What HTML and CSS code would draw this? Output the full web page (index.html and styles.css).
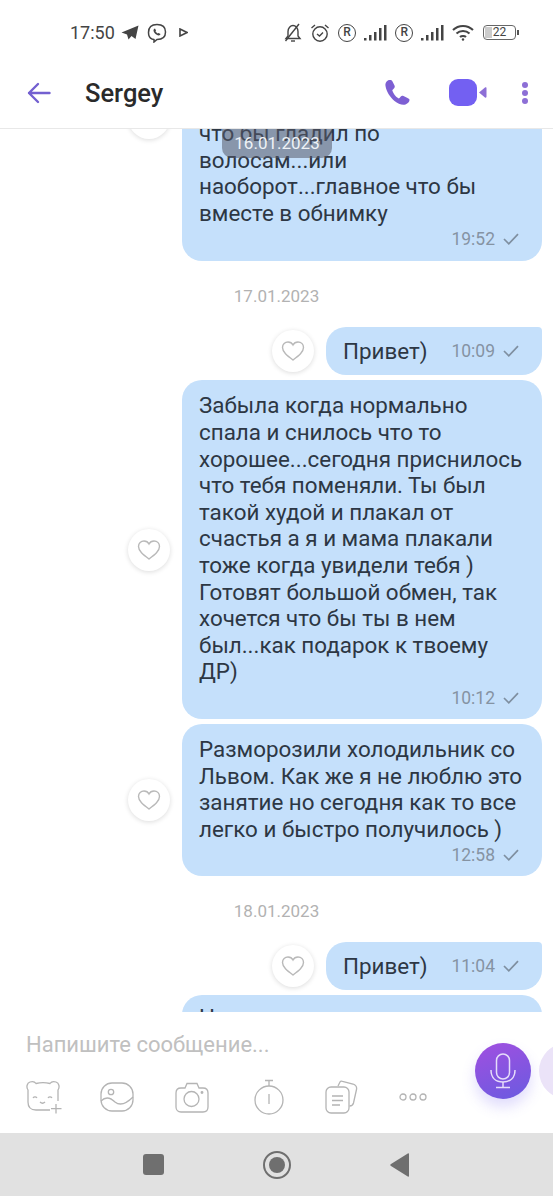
FILE: index.html
```html
<!DOCTYPE html>
<html lang="en">
<head>
    <meta charset="UTF-8">
    <meta name="viewport" content="width=device-width, initial-scale=1.0">
    <title>Sergey</title>
    <link rel="stylesheet" href="styles.css">
</head>
<body>
    <div class="phone">
        <div class="status-bar">
            <span class="status-time">17:50</span>
            <svg class="st-telegram" width="18" height="15" viewBox="0 0 18 15"><path d="M17.5 0.5 L0.5 7.5 L6 9.5 L7.5 14.5 L10.5 11 L14.5 14 Z" fill="#444"/></svg>
            <svg class="st-viber" width="20" height="20" viewBox="0 0 20 20" fill="none" stroke="#444" stroke-width="1.5"><path d="M5 16 C2.5 15 1.5 13 1.5 9.5 C1.5 4 4 1.5 10 1.5 C16 1.5 18.5 4 18.5 9 C18.5 14.5 15.5 16.5 10 16.5 L7 19 L7 16.5 Z"/><path d="M7 6 C6 7 6.5 9 8 10.5 C9.5 12 11.5 13 13 12 L13.5 11 L11.5 10 L10.5 10.5 L8.5 8.5 L9 7.5 L8 5.5 Z" fill="#444" stroke="none"/></svg>
            <svg class="st-play" width="9" height="9" viewBox="0 0 9 9" fill="none" stroke="#444" stroke-width="1.6"><path d="M1 1 L8 4.5 L1 8 Z"/></svg>
            <div class="status-right">
                <svg width="20" height="20" viewBox="0 0 20 20" fill="none" stroke="#444" stroke-width="1.4"><path d="M3 15.5 L5 13 L5 8.5 C5 5 7.5 2.5 10 2.5 C12.5 2.5 15 5 15 8.5 L15 13 L17 15.5 Z"/><path d="M8 18 L12 18"/><path d="M2.5 18 L16 1"/></svg>
                <svg width="20" height="20" viewBox="0 0 20 20" fill="none" stroke="#444" stroke-width="1.4"><circle cx="10" cy="11" r="7.2"/><path d="M7 11 L9.5 13 L13 9.5"/><path d="M1.5 5 L5 2 M18.5 5 L15 2"/></svg>
                <span class="reg-mark">R</span>
                <svg width="24" height="18" viewBox="0 0 24 18" fill="#444"><rect x="0" y="14" width="2.5" height="2.5"/><rect x="5" y="11" width="2.5" height="5.5"/><rect x="10" y="8" width="2.5" height="8.5"/><rect x="15" y="4" width="2.5" height="12.5"/><rect x="20" y="1" width="2.5" height="15.5"/></svg>
                <span class="reg-mark">R</span>
                <svg width="24" height="18" viewBox="0 0 24 18" fill="#444"><rect x="0" y="14" width="2.5" height="2.5"/><rect x="5" y="11" width="2.5" height="5.5"/><rect x="10" y="8" width="2.5" height="8.5"/><rect x="15" y="4" width="2.5" height="12.5"/><rect x="20" y="1" width="2.5" height="15.5"/></svg>
                <svg width="23" height="18" viewBox="0 0 23 18" fill="none" stroke="#444" stroke-width="2"><path d="M1 6 C6.5 0.5 15.5 0.5 21 6"/><path d="M4.5 9.5 C8 6 14 6 17.5 9.5"/><path d="M8 13 C9.5 11.5 12.5 11.5 14 13"/><circle cx="11" cy="15.5" r="1.2" fill="#444" stroke="none"/></svg>
                <div class="battery"><span class="battery-fill"></span><span class="battery-num">22</span></div>
            </div>
        </div>

        <div class="toolbar">
            <svg class="back-icon" width="24" height="22" viewBox="0 0 24 22" fill="none" stroke="#7360d0" stroke-width="2.4" stroke-linecap="round" stroke-linejoin="round"><path d="M22.5 11 L2 11 M11 2 L2 11 L11 20"/></svg>
            <div class="contact-name">Sergey</div>
            <svg class="phone-icon" width="27" height="27" viewBox="0 0 27 27"><path d="M5 1 C3 1.5 1 3.5 1.5 7 C2.5 13 6 18 10.5 22 C14 25 18.5 26.5 21.5 25.5 C24 24.5 25.5 22.5 25.5 21 C25.5 20 24.5 19.5 23.5 19 L19.5 17 C18.5 16.5 17.5 16.5 16.8 17.5 L15.5 19 C15 19.5 14.5 19.5 14 19 C11.5 17.5 9.5 14.5 8.5 12 C8.2 11.3 8.5 10.8 9 10.5 L10.3 9 C11 8.2 10.8 7.2 10.5 6.5 L8.5 2.5 C7.8 1 6.5 0.7 5 1 Z" fill="#7d5fd3"/></svg>
            <svg class="video-icon" width="38" height="28" viewBox="0 0 38 28"><rect x="0" y="0" width="28" height="27" rx="9" fill="#7360f2"/><path d="M30 13.5 L36 8.5 C37 8 37.5 8.5 37.5 9.5 L37.5 17.5 C37.5 18.5 37 19 36 18.5 Z" fill="#8d6fd6"/></svg>
            <div class="more-dots"><span></span><span></span><span></span></div>
        </div>

        <div class="chat">
            <div class="date-pill">16.01.2023</div>
            <div class="messages">
                <div class="msg-row">
                    <div class="like-btn"><svg width="24" height="22" viewBox="0 0 24 22" fill="none" stroke="#b9b9b9" stroke-width="1.4"><path d="M12 20 C6 15.5 1.5 12 1.5 7.5 C1.5 4 4 2 7 2 C9 2 11 3 12 5 C13 3 15 2 17 2 C20 2 22.5 4 22.5 7.5 C22.5 12 18 15.5 12 20 Z"/></svg></div>
                    <div class="bubble bubble-clipped">
                        <div class="bubble-text">что бы гладил по<br>волосам...или<br>наоборот...главное что бы<br>вместе в обнимку</div>
                        <div class="bubble-meta"><span>19:52</span><svg width="16" height="12" viewBox="0 0 16 12" fill="none" stroke="#7f8fa0" stroke-width="1.7"><path d="M1 6 L5.8 10.8 L15 1.2"/></svg></div>
                    </div>
                </div>

                <div class="date-label">17.01.2023</div>

                <div class="msg-row">
                    <div class="like-btn"><svg width="24" height="22" viewBox="0 0 24 22" fill="none" stroke="#b9b9b9" stroke-width="1.4"><path d="M12 20 C6 15.5 1.5 12 1.5 7.5 C1.5 4 4 2 7 2 C9 2 11 3 12 5 C13 3 15 2 17 2 C20 2 22.5 4 22.5 7.5 C22.5 12 18 15.5 12 20 Z"/></svg></div>
                    <div class="bubble bubble-short">
                        <span class="bubble-text">Привет)</span>
                        <div class="bubble-meta"><span>10:09</span><svg width="16" height="12" viewBox="0 0 16 12" fill="none" stroke="#7f8fa0" stroke-width="1.7"><path d="M1 6 L5.8 10.8 L15 1.2"/></svg></div>
                    </div>
                </div>

                <div class="msg-row">
                    <div class="like-btn"><svg width="24" height="22" viewBox="0 0 24 22" fill="none" stroke="#b9b9b9" stroke-width="1.4"><path d="M12 20 C6 15.5 1.5 12 1.5 7.5 C1.5 4 4 2 7 2 C9 2 11 3 12 5 C13 3 15 2 17 2 C20 2 22.5 4 22.5 7.5 C22.5 12 18 15.5 12 20 Z"/></svg></div>
                    <div class="bubble">
                        <div class="bubble-text">Забыла когда нормально<br>спала и снилось что то<br>хорошее...сегодня приснилось<br>что тебя поменяли. Ты был<br>такой худой и плакал от<br>счастья а я и мама плакали<br>тоже когда увидели тебя )<br>Готовят большой обмен, так<br>хочется что бы ты в нем<br>был...как подарок к твоему<br>ДР)</div>
                        <div class="bubble-meta"><span>10:12</span><svg width="16" height="12" viewBox="0 0 16 12" fill="none" stroke="#7f8fa0" stroke-width="1.7"><path d="M1 6 L5.8 10.8 L15 1.2"/></svg></div>
                    </div>
                </div>

                <div class="msg-row">
                    <div class="like-btn"><svg width="24" height="22" viewBox="0 0 24 22" fill="none" stroke="#b9b9b9" stroke-width="1.4"><path d="M12 20 C6 15.5 1.5 12 1.5 7.5 C1.5 4 4 2 7 2 C9 2 11 3 12 5 C13 3 15 2 17 2 C20 2 22.5 4 22.5 7.5 C22.5 12 18 15.5 12 20 Z"/></svg></div>
                    <div class="bubble">
                        <div class="bubble-text">Разморозили холодильник со<br>Львом. Как же я не люблю это<br>занятие но сегодня как то все<br>легко и быстро получилось )</div>
                        <div class="bubble-meta"><span>12:58</span><svg width="16" height="12" viewBox="0 0 16 12" fill="none" stroke="#7f8fa0" stroke-width="1.7"><path d="M1 6 L5.8 10.8 L15 1.2"/></svg></div>
                    </div>
                </div>

                <div class="date-label">18.01.2023</div>

                <div class="msg-row">
                    <div class="like-btn"><svg width="24" height="22" viewBox="0 0 24 22" fill="none" stroke="#b9b9b9" stroke-width="1.4"><path d="M12 20 C6 15.5 1.5 12 1.5 7.5 C1.5 4 4 2 7 2 C9 2 11 3 12 5 C13 3 15 2 17 2 C20 2 22.5 4 22.5 7.5 C22.5 12 18 15.5 12 20 Z"/></svg></div>
                    <div class="bubble bubble-short">
                        <span class="bubble-text">Привет)</span>
                        <div class="bubble-meta"><span>11:04</span><svg width="16" height="12" viewBox="0 0 16 12" fill="none" stroke="#7f8fa0" stroke-width="1.7"><path d="M1 6 L5.8 10.8 L15 1.2"/></svg></div>
                    </div>
                </div>

                <div class="msg-row">
                    <div class="bubble bubble-last">
                        <div class="bubble-text">Н</div>
                    </div>
                </div>
            </div>
        </div>

        <div class="composer">
            <div class="placeholder">Напишите сообщение...</div>
            <div class="tool-row">
                <svg class="tool-bear" width="36" height="34" viewBox="0 0 36 34" fill="none" stroke="#b4b4b4" stroke-width="1.3"><path d="M24 30 L10 30 C5 30 2 27 2 22 L2 10 C0 7 1 3 4 2 C7 1 9 2 10 3.5 C14 2.5 20 2.5 24 3.5 C25 2 27 1 30 2 C33 3 34 7 32 10 L32 21"/><path d="M7 18 C8 16.5 10 16.5 11 18 M22 18 C23 16.5 25 16.5 26 18 M14 22 C15.5 23.5 17.5 23.5 19 22"/><path d="M30 24 L30 33.5 M25 28.7 L35.5 28.7"/></svg>
                <svg width="34" height="30" viewBox="0 0 34 30" fill="none" stroke="#b4b4b4" stroke-width="1.3"><rect x="1" y="1" width="32" height="28" rx="11"/><circle cx="11" cy="10" r="2.7"/><path d="M1 19 C6 14 11 16 15 20 C20 24 26 22 33 15"/></svg>
                <svg width="34" height="31" viewBox="0 0 34 31" fill="none" stroke="#b4b4b4" stroke-width="1.3"><path d="M6 6 L10 6 L12 1.5 L22 1.5 L24 6 L28 6 C31 6 33 8 33 11 L33 25 C33 28 31 30 28 30 L6 30 C3 30 1 28 1 25 L1 11 C1 8 3 6 6 6 Z"/><circle cx="16.5" cy="17" r="7.5"/><circle cx="27" cy="10.5" r="0.8" fill="#b4b4b4"/></svg>
                <svg class="tool-timer" width="30" height="36" viewBox="0 0 30 36" fill="none" stroke="#b4b4b4" stroke-width="1.3"><circle cx="15" cy="21" r="14"/><path d="M15 7 L15 2 M11 1.5 L19 1.5 M15 15 L15 25"/></svg>
                <svg width="33" height="34" viewBox="0 0 33 34" fill="none" stroke="#b4b4b4" stroke-width="1.3"><rect x="1" y="7" width="23" height="26" rx="5"/><path d="M7 16 L18 16 M7 20.5 L18 20.5 M7 25 L15 25"/><path d="M13 6 L15 2 C15.5 1 16.5 1 17.5 1.3 L28 4 C31 5 32 7 31.5 9.5 L28.5 23 C28 25 26.5 26 24.5 26"/></svg>
                <svg width="28" height="8" viewBox="0 0 28 8" fill="none" stroke="#b4b4b4" stroke-width="1.3"><circle cx="4" cy="4" r="3"/><circle cx="14" cy="4" r="3"/><circle cx="24" cy="4" r="3"/></svg>
            </div>
            <div class="mic-btn">
                <svg width="26" height="36" viewBox="0 0 26 36" fill="none" stroke="#e6dcfa" stroke-width="1.5"><rect x="6.5" y="1" width="13" height="25" rx="6.5"/><path d="M1 17 C1 25 6 29 13 29 C20 29 25 25 25 17"/><path d="M13 29 L13 34 M6 34.5 L20 34.5"/></svg>
            </div>
            <div class="send-peek"></div>
        </div>

        <div class="nav-bar">
            <span class="nav-square"></span>
            <span class="nav-circle"><span></span></span>
            <svg width="20" height="24" viewBox="0 0 20 24"><path d="M19 1 L19 23 C19 24 18 24 17 23 L1 13 C0 12.4 0 11.6 1 11 L17 1 C18 0 19 0 19 1 Z" fill="#6f6f6f"/></svg>
        </div>
    </div>
</body>
</html>
```

FILE: styles.css
```css
* {
    box-sizing: border-box;
}
html, body {
    margin: 0;
    padding: 0;
}
body {
    font-family: Roboto, "Noto Sans", sans-serif;
    background-color: white;
}
.phone {
    width: 553px;
    height: 1196px;
    display: flex;
    flex-direction: column;
    overflow: hidden;
}
.status-bar {
    height: 65px;
    flex-shrink: 0;
    display: flex;
    align-items: center;
    padding: 0 37px 0 70px;
    color: #444;
    background-color: white;
}
.status-time {
    font-size: 18px;
    margin-right: 6px;
}
.st-telegram {
    margin-right: 8px;
}
.st-viber {
    margin-right: 12px;
}
.status-right {
    margin-left: auto;
    display: flex;
    align-items: center;
    gap: 7.6px;
}
.reg-mark {
    width: 18px;
    height: 18px;
    border: 1.5px solid #444;
    border-radius: 50%;
    font-size: 12px;
    font-weight: 500;
    line-height: 15px;
    text-align: center;
}
.battery {
    position: relative;
    width: 33px;
    height: 15px;
    border: 1px solid #666;
    border-radius: 4px;
    font-size: 12px;
    line-height: 13px;
    text-align: center;
}
.battery::after {
    content: "";
    position: absolute;
    right: -4px;
    top: 4px;
    width: 2px;
    height: 5px;
    background-color: #555;
}
.battery-fill {
    position: absolute;
    left: 1px;
    top: 1px;
    bottom: 1px;
    width: 7px;
    background-color: #ccc;
}
.battery-num {
    position: relative;
}
.toolbar {
    height: 64px;
    flex-shrink: 0;
    display: flex;
    align-items: center;
    padding: 0 25px 8px 27px;
    background-color: white;
    border-bottom: 1px solid #e8e8e8;
    position: relative;
    z-index: 2;
}
.back-icon {
    margin-right: 34px;
}
.contact-name {
    flex: 1;
    font-size: 25.5px;
    font-weight: 500;
    color: #2a2a2a;
}
.phone-icon {
    margin-right: 38px;
}
.video-icon {
    margin-right: 35px;
}
.more-dots {
    display: flex;
    flex-direction: column;
    gap: 2px;
}
.more-dots span {
    width: 6px;
    height: 6px;
    border-radius: 50%;
    background-color: #8d6fd6;
}
.chat {
    flex: 1;
    min-height: 0;
    position: relative;
    overflow: hidden;
    background-color: white;
}
.date-pill {
    position: absolute;
    top: 0;
    left: 222px;
    width: 110px;
    height: 29px;
    border-radius: 0 0 10px 10px;
    background-color: rgba(85, 90, 105, 0.55);
    color: #eef2f6;
    font-size: 17px;
    line-height: 28px;
    text-align: center;
    z-index: 1;
}
.messages {
    display: flex;
    flex-direction: column;
    gap: 5px;
    margin-top: -154px;
    padding: 0 11px;
}
.msg-row {
    display: flex;
    justify-content: flex-end;
    align-items: center;
    gap: 12px;
}
.bubble {
    width: 360px;
    padding: 12px 23px 10px 17px;
    border-radius: 20px;
    background-color: #c5e0fb;
    color: #2d3744;
}
/* top of this one is scrolled away under the toolbar */
.bubble-clipped {
    padding-top: 145px;
    padding-bottom: 11px;
}
.bubble-last {
    padding-top: 9px;
}
.bubble-short {
    width: 216px;
    height: 48px;
    padding: 0 23px 0 17px;
    display: flex;
    align-items: center;
    justify-content: space-between;
    border-top-right-radius: 4px;
}
.bubble-text {
    font-size: 22.4px;
    line-height: 26.6px;
    white-space: nowrap;
}
.bubble-meta {
    display: flex;
    justify-content: flex-end;
    align-items: center;
    gap: 8px;
    margin-top: 2px;
    color: #8593a3;
    font-size: 17.5px;
    height: 22px;
}
.bubble-short .bubble-meta {
    margin-top: 0;
}
.like-btn {
    width: 42px;
    height: 42px;
    flex-shrink: 0;
    display: flex;
    align-items: center;
    justify-content: center;
    border-radius: 50%;
    background-color: white;
    box-shadow: 0 1px 5px rgba(0, 0, 0, 0.14);
}
.date-label {
    text-align: center;
    color: #b2b2b2;
    font-size: 17px;
    line-height: 20px;
    padding: 20px 0 16px;
}
.composer {
    height: 121px;
    flex-shrink: 0;
    padding: 19px 0 0 26px;
    background-color: white;
    position: relative;
    z-index: 2;
}
.placeholder {
    font-size: 22px;
    line-height: 28px;
    color: #c0c0c0;
}
.tool-row {
    display: flex;
    align-items: center;
    gap: 41px;
    margin-top: 20px;
    height: 36px;
}
.tool-bear {
    margin-right: -3px;
}
.tool-timer {
    margin-left: 4px;
}
.mic-btn {
    position: absolute;
    left: 475px;
    top: 31px;
    width: 56px;
    height: 56px;
    display: flex;
    align-items: center;
    justify-content: center;
    border-radius: 50%;
    background: linear-gradient(160deg, #a14fe0, #6a5be0);
    box-shadow: 0 8px 14px rgba(115, 96, 242, 0.22);
}
.send-peek {
    position: absolute;
    left: 539px;
    top: 31px;
    width: 56px;
    height: 56px;
    border-radius: 50%;
    background-color: #ebe3f8;
}
.nav-bar {
    height: 63px;
    flex-shrink: 0;
    display: flex;
    align-items: center;
    padding-left: 143px;
    gap: 99px;
    background-color: #e1e1e1;
}
.nav-square {
    width: 21px;
    height: 21px;
    border-radius: 3px;
    background-color: #6f6f6f;
}
.nav-circle {
    width: 28px;
    height: 28px;
    display: flex;
    align-items: center;
    justify-content: center;
    border: 2.5px solid #6f6f6f;
    border-radius: 50%;
}
.nav-circle span {
    width: 16px;
    height: 16px;
    border-radius: 50%;
    background-color: #6f6f6f;
}
```
